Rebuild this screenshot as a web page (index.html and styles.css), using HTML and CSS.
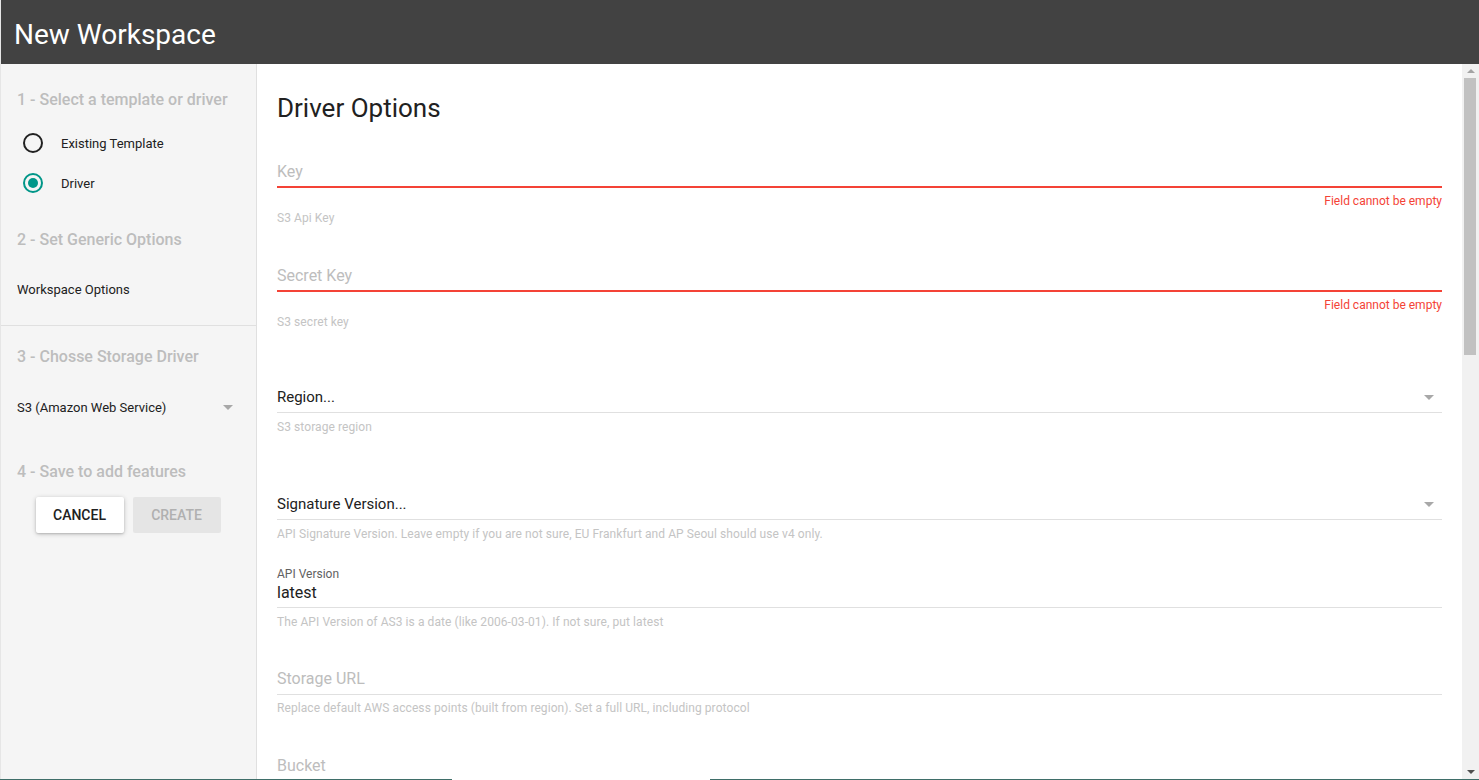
FILE: index.html
```html
<!DOCTYPE html>
<html lang="en">
<head>
    <meta charset="UTF-8">
    <meta name="viewport" content="width=device-width, initial-scale=1.0">
    <title>New Workspace</title>
    <link rel="stylesheet" href="styles.css">
</head>
<body>
    <header class="topbar">
        <h1 class="topbar-title">New Workspace</h1>
    </header>

    <div class="layout">
        <aside class="sidebar">
            <h3 class="step step-first">1 - Select a template or driver</h3>
            <div class="radio-group">
                <label class="radio-row">
                    <span class="radio"></span>
                    <span class="radio-label">Existing Template</span>
                </label>
                <label class="radio-row">
                    <span class="radio checked"><span class="radio-dot"></span></span>
                    <span class="radio-label">Driver</span>
                </label>
            </div>

            <h3 class="step step-second">2 - Set Generic Options</h3>
            <div class="side-item">Workspace Options</div>
            <div class="side-divider"></div>

            <h3 class="step step-third">3 - Chosse Storage Driver</h3>
            <div class="side-select">
                <span>S3 (Amazon Web Service)</span>
                <span class="caret"></span>
            </div>

            <h3 class="step step-fourth">4 - Save to add features</h3>
            <div class="actions">
                <button class="btn btn-raised">CANCEL</button>
                <button class="btn btn-disabled">CREATE</button>
            </div>
        </aside>

        <main class="content">
            <h2 class="content-title">Driver Options</h2>

            <div class="field field-key">
                <div class="field-input error placeholder">Key</div>
                <div class="field-error">Field cannot be empty</div>
                <div class="field-help">S3 Api Key</div>
            </div>

            <div class="field field-gap">
                <div class="field-input error placeholder">Secret Key</div>
                <div class="field-error">Field cannot be empty</div>
                <div class="field-help">S3 secret key</div>
            </div>

            <div class="field field-select-first">
                <div class="field-input select">
                    <span>Region...</span>
                    <span class="caret"></span>
                </div>
                <div class="field-help help-select">S3 storage region</div>
            </div>

            <div class="field field-select">
                <div class="field-input select">
                    <span>Signature Version...</span>
                    <span class="caret"></span>
                </div>
                <div class="field-help help-select">API Signature Version. Leave empty if you are not sure, EU Frankfurt and AP Seoul should use v4 only.</div>
            </div>

            <div class="field field-labeled">
                <div class="field-label">API Version</div>
                <div class="field-input filled">latest</div>
                <div class="field-help help-select">The API Version of AS3 is a date (like 2006-03-01). If not sure, put latest</div>
            </div>

            <div class="field field-url">
                <div class="field-input placeholder">Storage URL</div>
                <div class="field-help help-plain">Replace default AWS access points (built from region). Set a full URL, including protocol</div>
            </div>

            <div class="field field-gap">
                <div class="field-input placeholder">Bucket</div>
            </div>
        </main>

        <div class="scrollbar">
            <span class="scroll-up"></span>
            <div class="scroll-track">
                <div class="scroll-thumb"></div>
            </div>
            <span class="scroll-down"></span>
        </div>
    </div>

    <div class="bottom-line"></div>
</body>
</html>
```

FILE: styles.css
```css
* {
    box-sizing: border-box;
}
html, body {
    height: 100%;
}
body {
    margin: 0;
    font-family: Roboto, "Liberation Sans", Arial, sans-serif;
    color: #212121;
    overflow: hidden;
    display: flex;
    flex-direction: column;
    border-left: 1px solid #e6e6e6;
}
.topbar {
    height: 64px;
    background-color: #424242;
    display: flex;
    align-items: center;
    padding-left: 13px;
    flex-shrink: 0;
}
.topbar-title {
    margin: 0;
    color: #fff;
    font-size: 28px;
    font-weight: 400;
    line-height: 32px;
    padding-top: 5px;
}
.layout {
    flex: 1;
    display: flex;
    min-height: 0;
}

/* sidebar */
.sidebar {
    width: 256px;
    flex-shrink: 0;
    background-color: #f5f5f5;
    border-right: 1px solid #e0e0e0;
    padding: 26px 22px 0 16px;
}
.step {
    margin: 0;
    font-size: 16px;
    font-weight: 500;
    line-height: 20px;
    color: #bdbdbd;
}
.step-second {
    margin-top: 27px;
}
.step-third {
    margin-top: 21px;
}
.step-fourth {
    margin-top: 43px;
}
.radio-group {
    margin-top: 13px;
}
.radio-row {
    display: flex;
    align-items: center;
    height: 40px;
    padding-left: 6px;
}
.radio {
    width: 20px;
    height: 20px;
    border: 2px solid #212121;
    border-radius: 50%;
    display: flex;
    align-items: center;
    justify-content: center;
}
.radio.checked {
    border-color: #009688;
}
.radio-dot {
    width: 10px;
    height: 10px;
    border-radius: 50%;
    background-color: #009688;
}
.radio-label {
    margin-left: 18px;
    font-size: 13px;
}
.side-item {
    margin-top: 32px;
    font-size: 13px;
    line-height: 16px;
}
.side-divider {
    margin: 27px -22px 0 -16px;
    border-top: 1px solid #e0e0e0;
}
.side-select {
    margin-top: 28px;
    height: 24px;
    display: flex;
    align-items: center;
    justify-content: space-between;
    font-size: 13px;
}
.caret {
    width: 0;
    height: 0;
    border-left: 5px solid transparent;
    border-right: 5px solid transparent;
    border-top: 5px solid #a8a8a8;
    margin-right: 1px;
}
.actions {
    margin-top: 15px;
    display: flex;
    justify-content: center;
    gap: 9px;
    padding-left: 5px;
}
.btn {
    width: 88px;
    height: 36px;
    border: none;
    border-radius: 2px;
    font-family: inherit;
    font-size: 14px;
    font-weight: 500;
}
.btn-raised {
    background-color: #fff;
    color: #212121;
    box-shadow: 0 1px 5px rgba(0, 0, 0, 0.2), 0 1px 2px rgba(0, 0, 0, 0.15);
}
.btn-disabled {
    background-color: #e5e5e5;
    color: #b0b0b0;
}

/* content */
.content {
    flex: 1;
    min-width: 0;
    background-color: #fff;
    padding: 28px 20px 0 20px;
    overflow: hidden;
}
.content-title {
    margin: 0;
    font-size: 26px;
    font-weight: 400;
    line-height: 32px;
}
.field-key {
    margin-top: 33px;
}
.field-gap {
    margin-top: 36px;
}
.field-url {
    margin-top: 35px;
}
.field-select-first {
    margin-top: 54px;
}
.field-select {
    margin-top: 56px;
}
.field-labeled {
    margin-top: 26px;
}
.field-input {
    height: 31px;
    line-height: 30px;
    font-size: 16px;
    border-bottom: 1px solid #e0e0e0;
}
.field-input.error {
    border-bottom: 2px solid #f44336;
    line-height: 29px;
}
.field-input.placeholder {
    color: #bdbdbd;
}
.field-input.select {
    height: 30px;
    line-height: 29px;
    font-size: 15px;
    display: flex;
    align-items: center;
    justify-content: space-between;
    padding-right: 7px;
}
.field-label {
    font-size: 12px;
    line-height: 14px;
    color: #616161;
}
.field-input.filled {
    height: 27px;
    line-height: 24px;
}
.field-error {
    margin-top: 6px;
    text-align: right;
    font-size: 12px;
    line-height: 14px;
    color: #f44336;
}
.field-help {
    margin-top: 3px;
    font-size: 12px;
    line-height: 14px;
    letter-spacing: 0.08px;
    color: #c4c4c4;
}
.help-select {
    margin-top: 7px;
}
.help-plain {
    margin-top: 6px;
}

/* scrollbar */
.scrollbar {
    width: 17px;
    flex-shrink: 0;
    background-color: #f1f1f1;
    display: flex;
    flex-direction: column;
    align-items: center;
    padding: 5px 0 6px 0;
}
.scroll-up {
    width: 0;
    height: 0;
    border-left: 4px solid transparent;
    border-right: 4px solid transparent;
    border-bottom: 4px solid #a3a3a3;
}
.scroll-track {
    flex: 1;
    width: 100%;
    padding: 5px 3px 0 2px;
}
.scroll-thumb {
    height: 277px;
    background-color: #c1c1c1;
}
.scroll-down {
    width: 0;
    height: 0;
    border-left: 4px solid transparent;
    border-right: 4px solid transparent;
    border-top: 4px solid #505050;
}
.bottom-line {
    position: fixed;
    left: 0;
    right: 0;
    bottom: 0;
    height: 1px;
    background: linear-gradient(to right, #3f6e69 452px, transparent 452px, transparent 710px, #3f6e69 710px);
}
```
